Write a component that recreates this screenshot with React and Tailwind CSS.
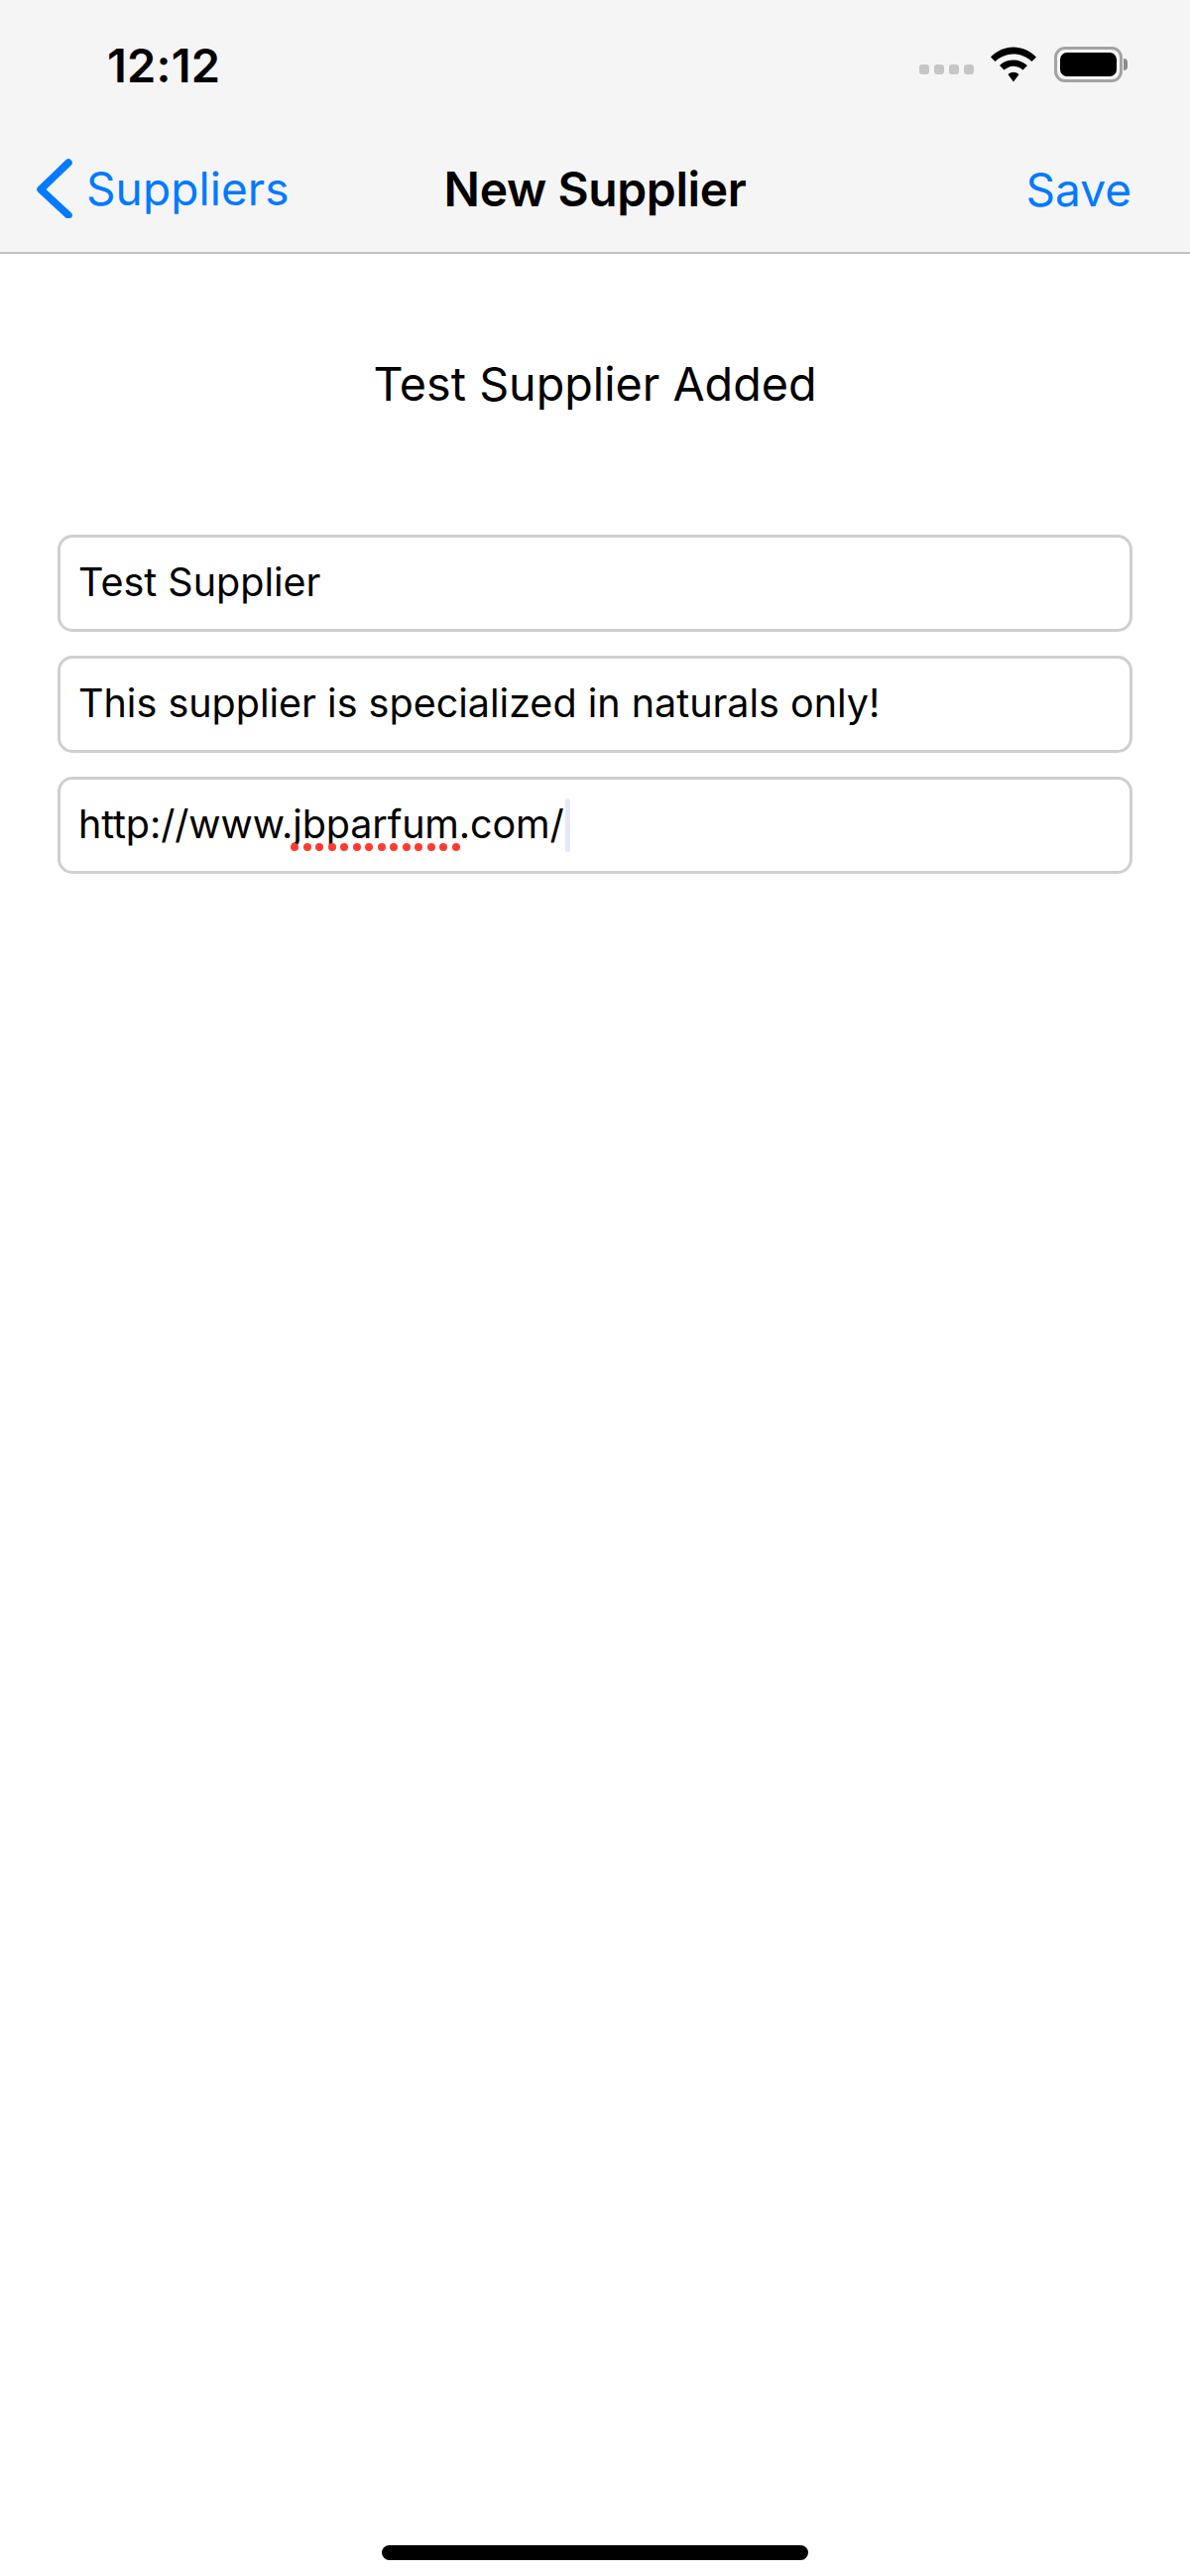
import React from 'react';

const font = "font-['Inter','Liberation_Sans',sans-serif]";

const fields = ['Test Supplier', 'This supplier is specialized in naturals only!'];

const StatusBar = () => (
  <div className="h-[130px] flex items-start justify-between pl-[108px] pr-[63px]">
    <span className="mt-[41px] text-[47px] leading-[50px] font-semibold tracking-[0.2px] text-black">12:12</span>
    <div className="flex items-center mt-[47px]">
      <div className="flex gap-[5px] mt-[10px] mr-[17px]">
        {[0, 1, 2, 3].map((i) => (
          <div key={i} className="w-[10px] h-[10px] rounded-[3px] bg-[#c6c6c7]" />
        ))}
      </div>
      <svg width="46" height="36" viewBox="0 0 46 36" className="mr-[18px]">
        <path d="M0 10.5 C13 -3 33 -3 46 10.5 L41.500 15 C31 5 15 5 4.500 15 Z" fill="#000" />
        <path d="M9 19 C17 11.500 29 11.500 37 19 L32.500 23.500 C26.500 18.500 19.500 18.500 13.500 23.500 Z" fill="#000" />
        <path d="M17.500 28 C21 25 25 25 28.500 28 L23 35.500 Z" fill="#000" />
      </svg>
      <div className="flex items-center">
        <div className="w-[69px] h-[36px] rounded-[11px] border-[3px] border-[#a3a3a3] p-[3px]">
          <div className="w-full h-full rounded-[7px] bg-black" />
        </div>
        <div className="w-[4px] h-[12px] rounded-r-full bg-[#8a8a8a] ml-[1px]" />
      </div>
    </div>
  </div>
);

const NavBar = () => (
  <div className="h-[126px] grid grid-cols-[1fr_auto_1fr] items-start px-[37px] border-b-2 border-[#c2c2c2]">
    <div className="flex items-center mt-[30px] gap-[14px]">
      <svg width="36" height="60" viewBox="0 0 36 60">
        <path d="M32 4 L4 31 L32 57" fill="none" stroke="#007aff" strokeWidth="7.500" strokeLinecap="round" strokeLinejoin="round" />
      </svg>
      <span className="text-[46px] leading-[60px] text-[#007aff] tracking-[0.1px]">Suppliers</span>
    </div>
    <span className="mt-[31px] text-[48px] leading-[60px] font-semibold text-black tracking-[-0.4px]">New Supplier</span>
    <span className="mt-[31px] pr-[22px] text-right text-[46px] leading-[60px] text-[#007aff]">Save</span>
  </div>
);

const Field = ({ children, className = '' }) => (
  <div className={`h-[98px] border-[3px] border-[#cfcfcf] rounded-[15px] pl-[18px] pb-[2px] flex items-center text-[39.5px] leading-[50px] text-black whitespace-nowrap ${className}`}>
    {children}
  </div>
);

const App = () => (
  <div className={`min-h-[2597px] flex flex-col bg-white ${font}`}>
    <div className="bg-[#f6f5f6]">
      <StatusBar />
      <NavBar />
    </div>

    <h1 className="mt-[101px] text-center text-[46.7px] leading-[60px] font-normal text-black">Test Supplier Added</h1>

    <div className="mt-[122px] mx-[58px] flex flex-col gap-[24px]">
      {fields.map((f) => (
        <Field key={f}>{f}</Field>
      ))}
      <Field className="tracking-[-0.13px]">
        http://www.
        <span className="relative">
          jbparfum
          <span className="absolute left-[-2px] right-[-1px] top-[44px] flex justify-between">
            {Array.from({ length: 14 }).map((_, i) => (
              <span key={i} className="w-[8px] h-[8px] rounded-full bg-[#ff3b30]" />
            ))}
          </span>
        </span>
        .com/
        <span className="ml-[1px] mt-[2px] w-[5px] h-[54px] rounded-full bg-[#e3e9fa]" />
      </Field>
    </div>

    <div className="mt-auto pb-[16px] flex justify-center">
      <div className="w-[430px] h-[15px] rounded-full bg-black" />
    </div>
  </div>
);

export default App;
